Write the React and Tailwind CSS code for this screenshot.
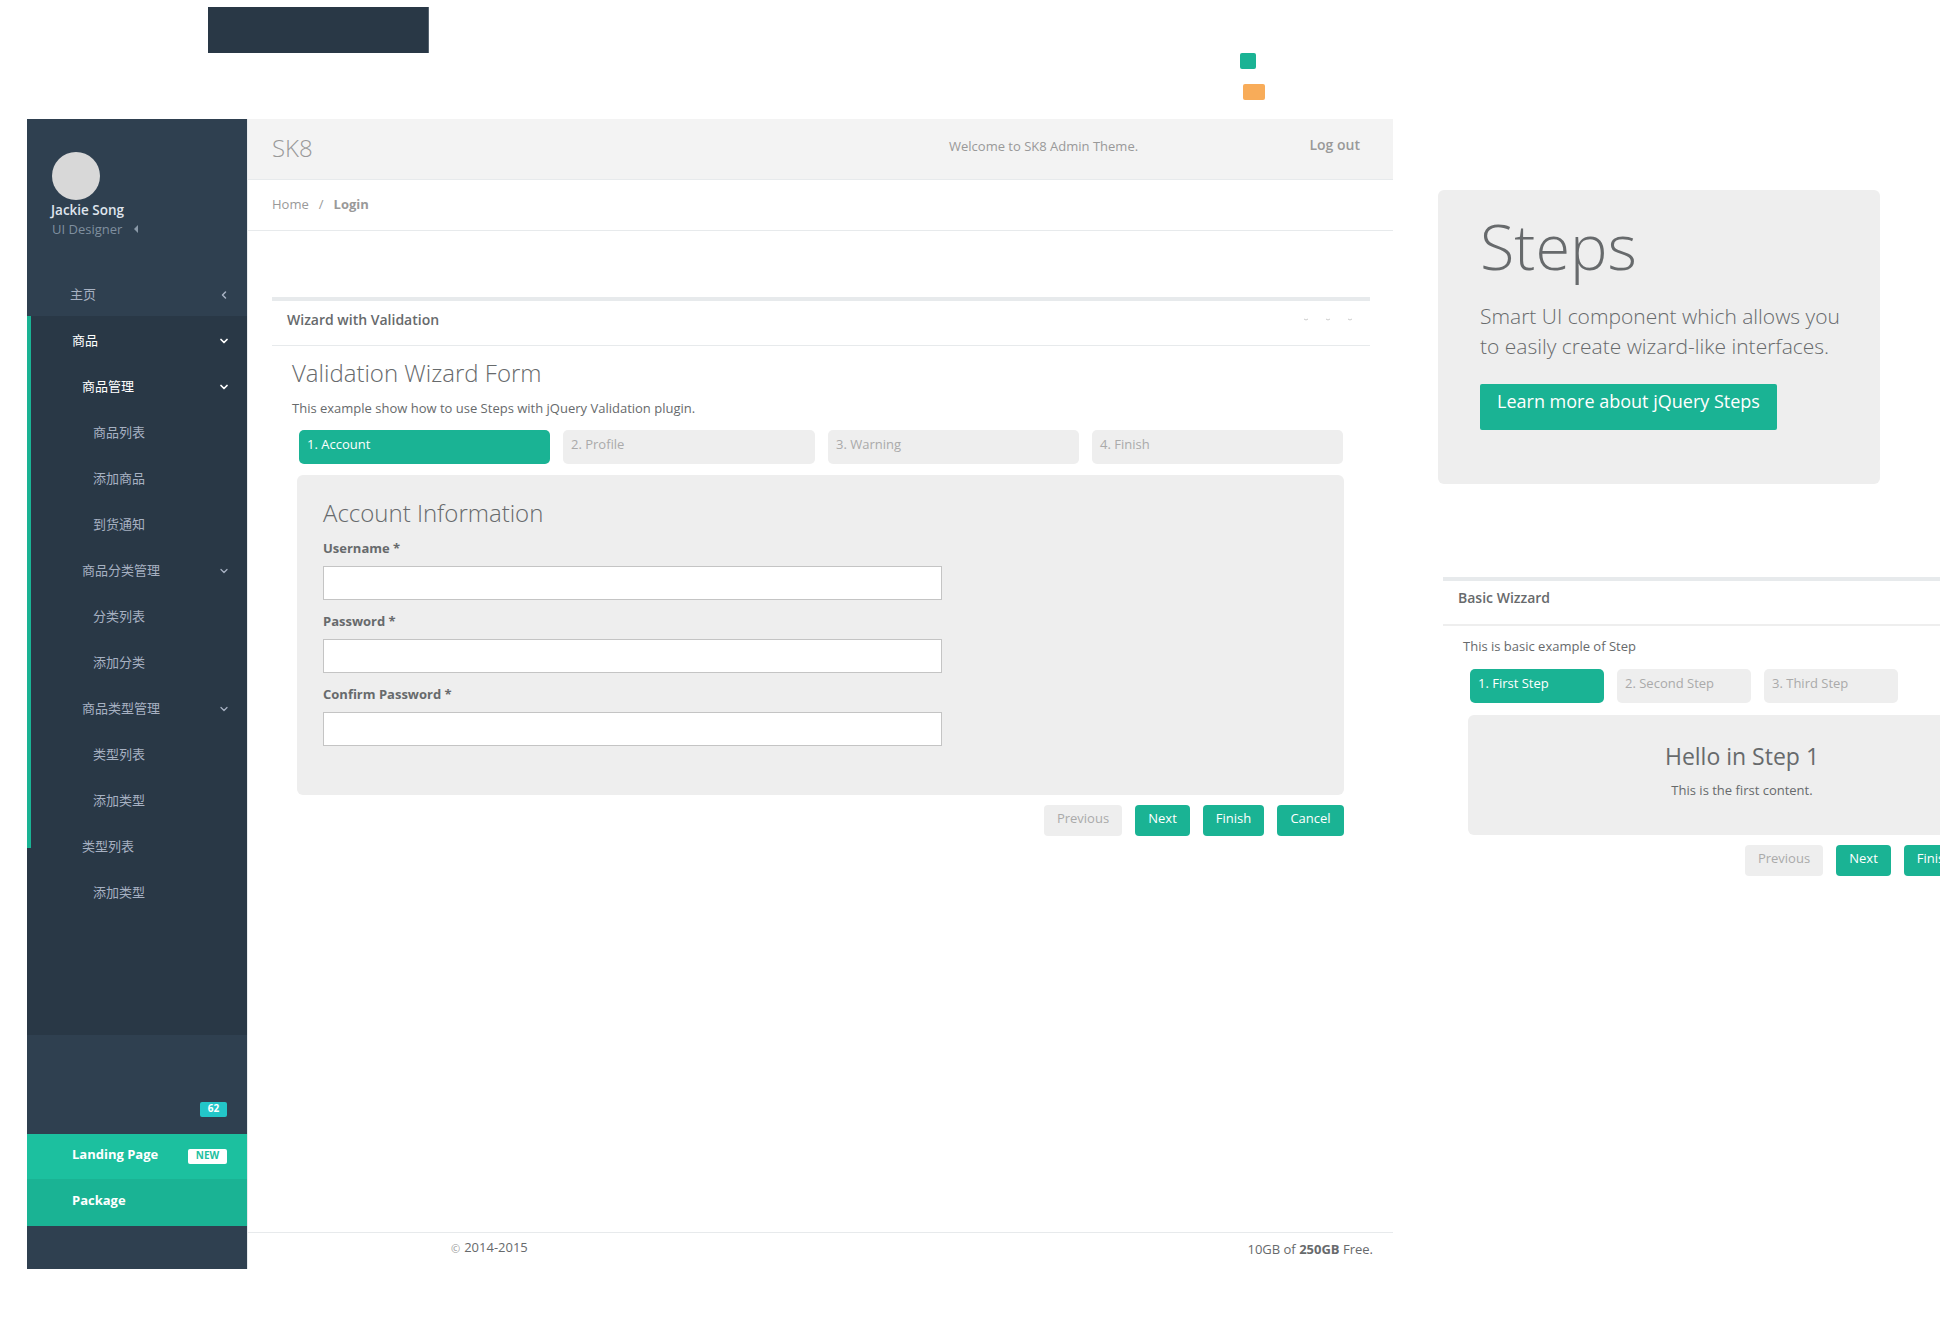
import React from "react";
import { ChevronDown, ChevronLeft } from "lucide-react";

const navRows = [
  { label: "商品", pad: "pl-[41px]", active: true, chevron: true },
  { label: "商品管理", pad: "pl-[51px]", active: true, chevron: true },
  { label: "商品列表", pad: "pl-[62px]" },
  { label: "添加商品", pad: "pl-[62px]" },
  { label: "到货通知", pad: "pl-[62px]" },
  { label: "商品分类管理", pad: "pl-[51px]", chevron: true },
  { label: "分类列表", pad: "pl-[62px]" },
  { label: "添加分类", pad: "pl-[62px]" },
  { label: "商品类型管理", pad: "pl-[51px]", chevron: true },
  { label: "类型列表", pad: "pl-[62px]" },
  { label: "添加类型", pad: "pl-[62px]" },
];

const NavRow = ({ label, pad, active, chevron }) => (
  <div
    className={`h-[46px] flex items-center justify-between pt-[3px] pr-[17px] ${pad} ${
      active ? "text-white" : "text-[#a7b1c2]"
    }`}
  >
    <span>{label}</span>
    {chevron && <ChevronDown size={12} strokeWidth={active ? 3.5 : 2.5} />}
  </div>
);

const Sidebar = () => (
  <aside className="w-[220px] h-[1150px] ml-[27px] shrink-0 bg-[#2f4050] flex flex-col">
    <div className="h-[152px] pt-[33px] pl-[23px]">
      <div className="w-12 h-12 ml-[2px] rounded-full bg-[#d8d8d8]" />
      <div className="mt-[1px] ml-[1px] leading-[19px] text-[13.5px] font-semibold text-[#dfe4ed]">Jackie Song</div>
      <div className="ml-[2px] leading-[18px] text-[#7f8f9f] flex items-center">
        UI Designer
        <span className="ml-3 w-0 h-0 border-y-[4px] border-y-transparent border-r-[4px] border-r-[#8a99a8]" />
      </div>
    </div>
    <div className="h-[45px] flex items-center justify-between pt-[2px] pl-[43px] pr-[17px] text-[#a7b1c2]">
      <span>主页</span>
      <ChevronLeft size={12} strokeWidth={3} />
    </div>
    <div className="h-[719px] bg-[#293846] flex">
      <div className="w-1 h-[532px] bg-[#1ab394]" />
      <div className="flex-1 min-w-0">
        {navRows.map((row) => (
          <NavRow key={row.label} {...row} />
        ))}
        <NavRow label="类型列表" pad="pl-[51px]" />
        <NavRow label="添加类型" pad="pl-[62px]" />
      </div>
    </div>
    <div className="h-[99px] flex items-end justify-end pr-5 pb-[17px]">
      <span className="w-[27px] h-[15px] rounded-[2px] bg-[#23c6c8] text-white text-[10px] leading-[13px] font-bold text-center">
        62
      </span>
    </div>
    <div className="h-[45px] bg-[#1cc09f] flex items-center justify-between pl-[45px] pr-5 text-white font-bold">
      <span className="pb-[3px]">Landing Page</span>
      <span className="w-[39px] h-[15px] rounded-[2px] bg-white text-[#1cc09f] text-[10px] leading-[13px] font-bold text-center">
        NEW
      </span>
    </div>
    <div className="h-[47px] bg-[#1ab394] flex items-center pl-[45px] pb-[3px] text-white font-bold">Package</div>
  </aside>
);

const Tab = ({ label, active, width }) => (
  <div
    className={`${width} h-[34px] shrink-0 rounded-[5px] px-2 pt-1 leading-5 ${
      active ? "bg-[#1ab394] text-white" : "bg-[#eeeeee] text-[#aaaaaa]"
    }`}
  >
    {label}
  </div>
);

const WizardButton = ({ label, disabled, width }) => (
  <button
    className={`${width} h-[31px] shrink-0 rounded-[4px] pb-[3px] text-center ${
      disabled ? "bg-[#eeeeee] text-[#aaaaaa]" : "bg-[#1ab394] text-white"
    }`}
  >
    {label}
  </button>
);

const Field = ({ label }) => (
  <div className="h-[73px]">
    <div className="h-[18px] leading-[18px] font-bold">{label}</div>
    <input
      type="text"
      className="block w-[619px] h-[34px] mt-[9px] bg-white border border-[#c4c4c4] outline-none"
    />
  </div>
);

const PanelHeader = ({ title, tools, box }) => (
  <div className={`border-t-4 border-[#e7eaec] flex items-center justify-between pl-[15px] text-sm font-semibold ${box}`}>
    <span>{title}</span>
    {tools && (
      <div className="flex items-center gap-[18px] pr-[18px]">
        {[0, 1, 2].map((i) => (
          <svg key={i} width="4" height="3" viewBox="0 0 4 3" fill="none" stroke="#cccccc" strokeWidth="1">
            <path d="M0 1 L2 2 L4 1" />
          </svg>
        ))}
      </div>
    )}
  </div>
);

const MainContent = () => (
  <main className="w-[1146px] h-[1150px] shrink-0 border-l border-[#e7eaec] flex flex-col">
    <header className="h-[61px] bg-[#f3f3f3] border-b border-[#e7eaec] flex items-center pl-[24px] pr-[33px] text-[#999999]">
      <span className="w-[677px] text-2xl font-light pb-[3px]">SK8</span>
      <span className="pb-[4px]">Welcome to SK8 Admin Theme.</span>
      <span className="ml-auto text-sm font-semibold pb-[8px]">Log out</span>
    </header>
    <div className="h-[51px] border-b border-[#e7eaec] flex items-center pl-[24px] text-[#999999]">
      <span>Home</span>
      <span className="ml-[10px] mr-[10px]">/</span>
      <span className="font-bold">Login</span>
    </div>
    <section className="w-[1098px] ml-[24px] mt-[66px]">
      <PanelHeader title="Wizard with Validation" tools box="h-[48px] pb-[7px]" />
      <div className="border-t border-[#e7eaec] pl-[20px]">
        <h2 className="text-2xl font-light mt-[11px] leading-[32px]">Validation Wizard Form</h2>
        <p className="mt-[10px] leading-[18px]">This example show how to use Steps with jQuery Validation plugin.</p>
        <div className="flex gap-[13px] ml-[7px] mt-[13px]">
          <Tab label="1. Account" active width="w-[251px]" />
          <Tab label="2. Profile" width="w-[252px]" />
          <Tab label="3. Warning" width="w-[251px]" />
          <Tab label="4. Finish" width="w-[251px]" />
        </div>
        <div className="w-[1047px] h-[320px] ml-[5px] mt-[11px] bg-[#eeeeee] rounded-[6px] pl-[26px] pt-[21px]">
          <h3 className="text-2xl font-light leading-[34px]">Account Information</h3>
          <div className="mt-[9px]">
            <Field label="Username *" />
            <Field label="Password *" />
            <Field label="Confirm Password *" />
          </div>
        </div>
        <div className="flex justify-end gap-[13px] w-[1052px] mt-[10px]">
          <WizardButton label="Previous" disabled width="w-[78px]" />
          <WizardButton label="Next" width="w-[55px]" />
          <WizardButton label="Finish" width="w-[61px]" />
          <WizardButton label="Cancel" width="w-[67px]" />
        </div>
      </div>
    </section>
    <footer className="mt-auto h-[37px] border-t border-[#e7eaec] flex items-center pl-[203px] pr-[20px] pb-[3px]">
      <span className="flex items-center gap-[4px] pb-[3px]">
        <span className="text-[11px] text-[#999999] pt-[2px]">©</span>
        2014-2015
      </span>
      <span className="ml-auto">
        10GB of <b className="font-bold">250GB</b> Free.
      </span>
    </footer>
  </main>
);

const RightColumn = () => (
  <div className="ml-[45px] w-[620px] shrink-0">
    <div className="w-[442px] h-[294px] mt-[71px] bg-[#eeeeee] rounded-[6px] pl-[42px] pt-[13px]">
      <h1 className="text-[63px] font-light leading-[86px]">Steps</h1>
      <p className="mt-[12px] text-[21px] font-light leading-[30px] whitespace-nowrap">
        Smart UI component which allows you
        <br />
        to easily create wizard-like interfaces.
      </p>
      <button className="block w-[297px] h-[46px] mt-[23px] rounded-[2px] bg-[#1ab394] text-white text-lg text-center pb-[12px]">
        Learn more about jQuery Steps
      </button>
    </div>
    <section className="ml-[5px] mt-[93px] w-[620px]">
      <PanelHeader title="Basic Wizzard" box="h-[47px] pb-[9px]" />
      <div className="border-t-2 border-[#eeeeee] pl-[20px]">
        <p className="mt-[11px] leading-[18px]">This is basic example of Step</p>
        <div className="flex gap-[13px] ml-[7px] mt-[14px]">
          <Tab label="1. First Step" active width="w-[134px]" />
          <Tab label="2. Second Step" width="w-[134px]" />
          <Tab label="3. Third Step" width="w-[134px]" />
        </div>
        <div className="w-[548px] h-[120px] ml-[5px] mt-[12px] bg-[#eeeeee] rounded-[6px] pt-[24px] text-center">
          <h3 className="text-[23px] leading-[34px]">Hello in Step 1</h3>
          <p className="mt-[8px] leading-[18px]">This is the first content.</p>
        </div>
        <div className="flex gap-[13px] ml-[282px] mt-[10px]">
          <WizardButton label="Previous" disabled width="w-[78px]" />
          <WizardButton label="Next" width="w-[55px]" />
          <WizardButton label="Finish" width="w-[61px]" />
        </div>
      </div>
    </section>
  </div>
);

export default function App() {
  return (
    <div className="w-[1940px] h-[1325px] overflow-hidden bg-white text-[13px] text-[#676a6c] font-['Open_Sans','Noto_Sans_CJK_SC',sans-serif]">
      <div className="h-[119px] flex items-start">
        <div className="w-[221px] h-[46px] ml-[208px] mt-[7px] bg-[#293846] border-r border-[#55636f]" />
        <div className="ml-[811px] mt-[53px]">
          <div className="w-4 h-4 rounded-[2px] bg-[#1ab394]" />
          <div className="w-[22px] h-4 ml-[3px] mt-[15px] rounded-[2px] bg-[#f8ac59]" />
        </div>
      </div>
      <div className="flex items-start">
        <Sidebar />
        <MainContent />
        <RightColumn />
      </div>
    </div>
  );
}
